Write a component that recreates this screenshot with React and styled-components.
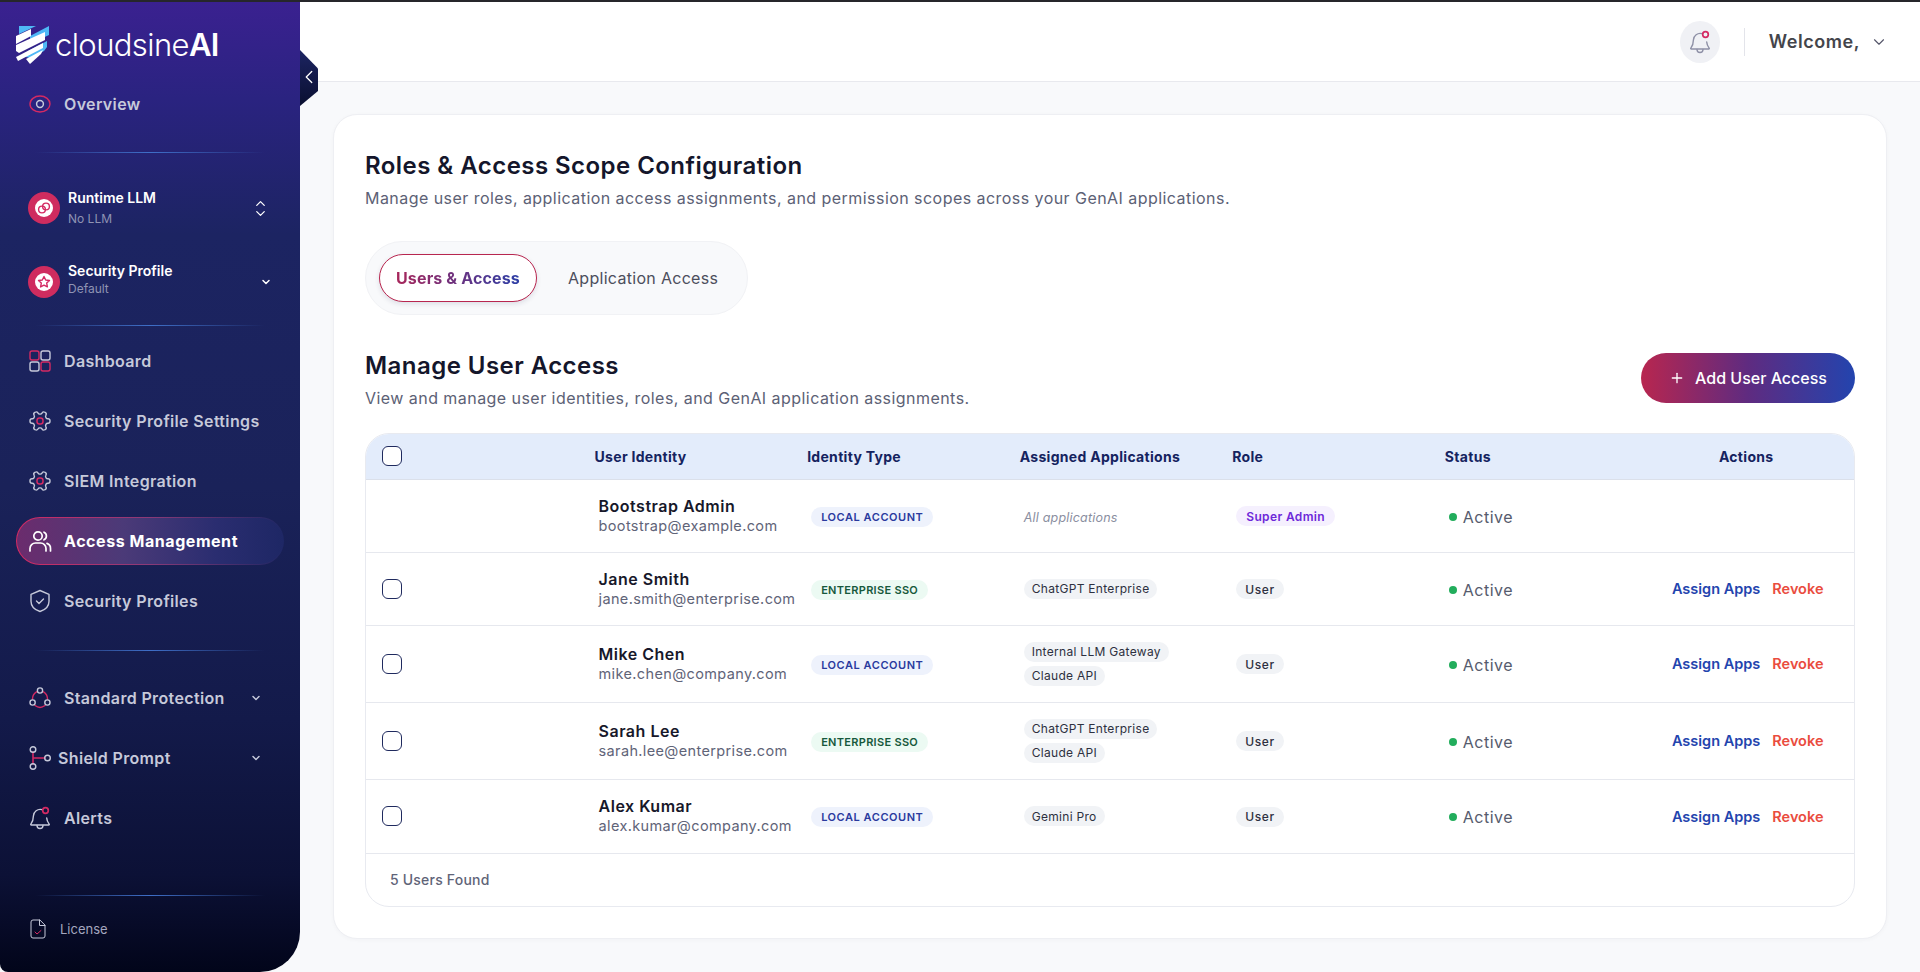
import React from 'react';
import styled, { createGlobalStyle } from 'styled-components';
import { ChevronDown, ChevronLeft, ChevronUp, Plus } from 'lucide-react';

const PINK = '#d42a63';
const GREY = '#c6c9da';

const GlobalStyle = createGlobalStyle`
  html, body {
    margin: 0;
    padding: 0;
    height: 100%;
    background: #f8f9fb;
    font-family: Inter, "Noto Sans", "Liberation Sans", sans-serif;
  }
  * {
    box-sizing: border-box;
  }
`;

const Shell = styled.div`
  height: 972px;
  border-top: 2px solid #26262b;
  display: flex;
  overflow: hidden;
`;

const Sidebar = styled.aside`
  position: relative;
  flex: 0 0 300px;
  height: 970px;
  display: flex;
  flex-direction: column;
  padding-top: 8px;
  border-radius: 0 0 40px 8px;
  background: linear-gradient(180deg, #3a2190 0%, #2a2380 10%, #1c2462 24%, #1a2259 50%, #131a4a 74%, #0c1136 90%, #02051a 100%);
`;

const Brand = styled.div`
  height: 70px;
  padding-left: 16px;
  display: flex;
  align-items: center;
  gap: 6px;
  color: #fff;
`;

const BrandName = styled.div`
  font-size: 31px;
  font-weight: 300;
  letter-spacing: -0.6px;
  margin-top: -2px;
  b {
    font-weight: 600;
  }
`;

const CollapseTab = styled.button`
  position: absolute;
  left: 300px;
  top: 48px;
  width: 18px;
  height: 56px;
  border: 0;
  padding: 0;
  display: flex;
  align-items: center;
  justify-content: center;
  color: #fff;
  background: linear-gradient(180deg, #1c2462, #0a0f30);
  clip-path: polygon(0 0, 100% 33%, 100% 73%, 0 100%);
  svg {
    flex: none;
    margin-top: -3px;
  }
`;

const NavGroup = styled.nav`
  display: flex;
  flex-direction: column;
  gap: 12px;
  margin-top: ${props => props.top || 0}px;
`;

const NavItem = styled.a`
  height: 48px;
  margin: 0 16px;
  padding: 0 ${props => props.chevron ? '22px' : '0'} 0 12px;
  display: flex;
  align-items: center;
  gap: ${props => props.tight ? '6px' : '12px'};
  font-size: 16px;
  font-weight: 600;
  letter-spacing: 0.35px;
  color: ${props => props.active ? '#fff' : GREY};
  border-radius: 24px;
  ${props => props.active && `
    font-weight: 700;
    letter-spacing: 0.55px;
    border: 1px solid transparent;
    padding-left: 11px;
    background:
      linear-gradient(90deg, #6b2c6d 0%, #4b3a78 40%, #2a2d70 75%, #1e2765 100%) padding-box,
      linear-gradient(90deg, #d42a63 0%, #8a3a78 50%, #1e2765 100%) border-box;
  `}
`;

const NavLabel = styled.span`
  flex: 1;
  white-space: nowrap;
`;

const Divider = styled.div`
  height: 1px;
  margin: ${props => props.top}px 35px 0;
  background: linear-gradient(90deg, transparent, #3f6fc8 50%, transparent);
`;

const Selector = styled.div`
  height: 48px;
  margin-top: ${props => props.top}px;
  padding: 0 28px;
  display: flex;
  align-items: center;
  gap: 8px;
  color: #fff;
`;

const SelectorBadge = styled.span`
  flex: 0 0 32px;
  height: 32px;
  border-radius: 50%;
  background: #cf2c5f;
  display: flex;
  align-items: center;
  justify-content: center;
`;

const SelectorDot = styled.span`
  width: 18px;
  height: 18px;
  border-radius: 50%;
  background: #fff;
  display: flex;
  align-items: center;
  justify-content: center;
`;

const SelectorText = styled.div`
  flex: 1;
  display: flex;
  flex-direction: column;
  gap: ${props => props.gap}px;
  margin-bottom: ${props => props.lift || 0}px;
`;

const SelectorTitle = styled.span`
  font-size: 14px;
  font-weight: 600;
  line-height: 16px;
`;

const SelectorSub = styled.span`
  font-size: 12px;
  line-height: 14px;
  color: #8f93b3;
`;

const ChevronStack = styled.span`
  display: flex;
  flex-direction: column;
  margin-right: 4px;
  svg + svg {
    margin-top: -5px;
  }
`;

const SideFooter = styled.div`
  margin-top: auto;
  height: 75px;
  padding: 0 0 11px 30px;
  display: flex;
  align-items: center;
  gap: 14px;
  font-size: 13px;
  color: #a4a7bf;
`;

const Main = styled.main`
  flex: 1;
  min-width: 0;
  display: flex;
  flex-direction: column;
`;

const TopBar = styled.header`
  height: 80px;
  flex: 0 0 80px;
  background: #fff;
  border-bottom: 1px solid #e8e9ee;
  display: flex;
  align-items: center;
  justify-content: flex-end;
  padding-right: 32px;
`;

const BellButton = styled.span`
  width: 40px;
  height: 42px;
  border-radius: 50%;
  background: #f0f1f5;
  display: flex;
  align-items: center;
  justify-content: center;
`;

const BarRule = styled.span`
  width: 1px;
  height: 28px;
  margin: 0 24px;
  background: #e3e4ea;
`;

const Welcome = styled.span`
  font-size: 18px;
  font-weight: 600;
  letter-spacing: 0.55px;
  color: #44454b;
  margin-right: 10px;
`;

const Content = styled.div`
  flex: 1;
  padding: 32px 33px 32px 33px;
`;

const Card = styled.section`
  height: 825px;
  background: #fff;
  border: 1px solid #eeeff3;
  border-radius: 24px;
  padding: 33px 31px 32px;
  box-shadow: 0 1px 4px rgba(30, 35, 70, 0.03);
`;

const Title = styled.h1`
  margin: 0;
  font-size: 24px;
  line-height: 36px;
  font-weight: 600;
  letter-spacing: 0.45px;
  color: #14162b;
`;

const Subtitle = styled.p`
  margin: 2px 0 0;
  font-size: 16px;
  line-height: 24px;
  letter-spacing: 0.45px;
  color: #5c6175;
`;

const Tabs = styled.div`
  margin-top: 31px;
  width: 383px;
  height: 74px;
  padding: 0 13px;
  display: flex;
  align-items: center;
  gap: 31px;
  background: #f8f9fb;
  border: 1px solid #f1f2f5;
  border-radius: 37px;
`;

const Tab = styled.span`
  height: ${props => props.active ? '48px' : 'auto'};
  padding: 0 ${props => props.active ? '16px' : '0'};
  display: flex;
  align-items: center;
  font-size: 16px;
  font-weight: ${props => props.active ? 700 : 400};
  letter-spacing: ${props => props.active ? '0.15px' : '0.3px'};
  color: #4c4e5c;
  border-radius: 24px;
  ${props => props.active && `
    background: #fff;
    border: 1.5px solid #b8264f;
    box-shadow: 0 2px 5px rgba(30, 35, 70, 0.12);
  `}
`;

const GradientText = styled.span`
  background: linear-gradient(90deg, #a8265a, #2c3ea6);
  -webkit-background-clip: text;
  background-clip: text;
  color: transparent;
`;

const SectionHead = styled.div`
  margin-top: 32px;
  display: flex;
  align-items: center;
  justify-content: space-between;
  height: 62px;
`;

const SectionText = styled.div`
  margin-top: 2px;
`;

const AddButton = styled.button`
  width: 214px;
  height: 50px;
  border: 0;
  border-radius: 25px;
  display: flex;
  align-items: center;
  justify-content: center;
  gap: 10px;
  font-family: inherit;
  font-size: 16px;
  font-weight: 500;
  color: #fff;
  background: linear-gradient(90deg, #b8264f 0%, #5f2b80 50%, #2344ae 100%);
`;

const TableWrap = styled.div`
  margin-top: 24px;
  border: 1px solid #e8eaf0;
  border-radius: 24px;
  overflow: hidden;
`;

const Table = styled.table`
  width: 100%;
  table-layout: fixed;
  border-collapse: collapse;
`;

const Th = styled.th`
  height: 45px;
  padding: 0 ${props => props.center ? '19px' : '16px'} 0 16px;
  background: #e3ecfb;
  border-bottom: 1px solid #dbe0ea;
  font-size: 14px;
  font-weight: 700;
  letter-spacing: 0.3px;
  text-align: ${props => props.center ? 'center' : 'left'};
  color: #15235f;
`;

const Tr = styled.tr`
  height: ${props => props.h}px;
  border-bottom: 1px solid #e6e8ee;
`;

const Td = styled.td`
  padding: ${props => props.check ? '0 16px' : '0 20px'};
  vertical-align: middle;
  text-align: ${props => props.center ? 'center' : 'left'};
`;

const CheckBox = styled.span`
  display: block;
  width: 20px;
  height: 20px;
  border: 1.5px solid #1f2a5e;
  border-radius: 6px;
  background: #fff;
`;

const UserName = styled.div`
  font-size: 16px;
  line-height: 20px;
  font-weight: 600;
  letter-spacing: 0.5px;
  color: #17182a;
`;

const UserMail = styled.div`
  font-size: 14.5px;
  line-height: 20px;
  letter-spacing: 0.36px;
  color: #5f6478;
  white-space: nowrap;
`;

const TypeBadge = styled.span`
  display: inline-flex;
  align-items: center;
  height: 20px;
  padding: 0 10px;
  border-radius: 10px;
  font-size: 11px;
  font-weight: 600;
  letter-spacing: ${props => props.sso ? '0.3px' : '0.55px'};
  white-space: nowrap;
  background: ${props => props.sso ? '#ecfaf3' : '#eef2fc'};
  color: ${props => props.sso ? '#17593c' : '#2a3a9e'};
`;

const AppList = styled.div`
  display: flex;
  flex-direction: column;
  align-items: flex-start;
  gap: 4px;
`;

const Chip = styled.span`
  display: inline-flex;
  align-items: center;
  height: 20px;
  padding: 0 ${props => props.strong ? '9px' : '8px'};
  border-radius: 10px;
  font-size: 12px;
  font-weight: ${props => props.strong ? 500 : 400};
  letter-spacing: ${props => props.strong ? '0.6px' : '0.3px'};
  white-space: nowrap;
  background: #f1f3f6;
  color: #2d3040;
`;

const RoleChip = styled(Chip)`
  padding: 0 10px;
  font-weight: 600;
  letter-spacing: 0.36px;
  background: #f5f0fe;
  color: #6d28d9;
`;

const NoApps = styled.span`
  font-size: 12.5px;
  font-style: italic;
  letter-spacing: 0.2px;
  color: #8a8ea0;
`;

const Status = styled.span`
  display: inline-flex;
  align-items: center;
  gap: 6px;
  font-size: 16px;
  letter-spacing: 0.5px;
  color: #565b6d;
  &::before {
    content: '';
    width: 8px;
    height: 8px;
    border-radius: 50%;
    background: #22ad5c;
  }
`;

const ActionRow = styled.div`
  display: flex;
  justify-content: center;
  gap: 12px;
  font-size: 14.5px;
  font-weight: 600;
`;

const Action = styled.a`
  color: ${props => props.danger ? '#ea4c3e' : '#2344ae'};
  white-space: nowrap;
`;

const TableFoot = styled.div`
  height: 52px;
  padding-left: 24px;
  display: flex;
  align-items: center;
  font-size: 14px;
  font-weight: 500;
  letter-spacing: 0.2px;
  color: #5f6478;
`;

const Svg = ({ children, size = 24 }) => (
  <svg width={size} height={size} viewBox="0 0 24 24" fill="none" strokeLinecap="round" strokeLinejoin="round">
    {children}
  </svg>
);

const GEAR = 'M12.22 2h-.44a2 2 0 0 0-2 2v.18a2 2 0 0 1-1 1.73l-.43.25a2 2 0 0 1-2 0l-.15-.08a2 2 0 0 0-2.73.73l-.22.38a2 2 0 0 0 .73 2.73l.15.1a2 2 0 0 1 1 1.72v.51a2 2 0 0 1-1 1.74l-.15.09a2 2 0 0 0-.73 2.73l.22.38a2 2 0 0 0 2.73.73l.15-.08a2 2 0 0 1 2 0l.43.25a2 2 0 0 1 1 1.73V20a2 2 0 0 0 2 2h.44a2 2 0 0 0 2-2v-.18a2 2 0 0 1 1-1.73l.43-.25a2 2 0 0 1 2 0l.15.08a2 2 0 0 0 2.73-.73l.22-.39a2 2 0 0 0-.73-2.73l-.15-.08a2 2 0 0 1-1-1.74v-.5a2 2 0 0 1 1-1.74l.15-.09a2 2 0 0 0 .73-2.73l-.22-.38a2 2 0 0 0-2.73-.73l-.15.08a2 2 0 0 1-2 0l-.43-.25a2 2 0 0 1-1-1.73V4a2 2 0 0 0-2-2z';

const LogoMark = () => (
  <svg width="33" height="38" viewBox="0 0 33 38">
    <polygon points="3,0 20,0 3,8" fill="#4fb8f6" />
    <polygon points="33,0 33,9 14,18 14,10" fill="#4fb8f6" />
    <polygon points="0,10 15,3 15,10 0,18" fill="#fff" />
    <polygon points="0,19 29,6 29,14 3,27 0,25" fill="#fff" />
    <polygon points="12,25 31,15 31,21 28,25 14,32 10,31" fill="#4fb8f6" />
    <polygon points="0,31 27,17 27,22 2,35" fill="#fff" />
    <polygon points="10,33 27,24 25,28 14,38" fill="#fff" />
  </svg>
);

const EyeIcon = () => (
  <Svg>
    <ellipse cx="12" cy="12" rx="10" ry="8" stroke={PINK} strokeWidth="1.4" />
    <circle cx="12" cy="12" r="3.4" stroke={GREY} strokeWidth="1.5" />
  </Svg>
);

const GridIcon = () => (
  <Svg>
    <rect x="2" y="2" width="9" height="9" rx="2" stroke={PINK} strokeWidth="1.4" />
    <rect x="13" y="2" width="9" height="9" rx="2" stroke={GREY} strokeWidth="1.4" />
    <rect x="2" y="13" width="9" height="9" rx="2" stroke={GREY} strokeWidth="1.4" />
    <rect x="13" y="13" width="9" height="9" rx="2" stroke={PINK} strokeWidth="1.4" />
  </Svg>
);

const GearIcon = () => (
  <Svg>
    <path d={GEAR} transform="rotate(90 12 12)" stroke={GREY} strokeWidth="1.4" />
    <rect x="9" y="9" width="6" height="6" rx="2.5" stroke={PINK} strokeWidth="1.5" />
  </Svg>
);

const UsersIcon = () => (
  <Svg>
    <circle cx="10" cy="7" r="4.2" stroke="#fff" strokeWidth="1.7" />
    <path d="M2 22v-2.5a5.5 5.5 0 0 1 5.5-5.5h5a5.5 5.5 0 0 1 5.5 5.5V22" stroke="#fff" strokeWidth="1.7" />
    <path d="M16 3.2a4.2 4.2 0 0 1 0 7.6M19 14.4a5.2 5.2 0 0 1 3.5 5V22" stroke="#fff" strokeWidth="1.7" />
  </Svg>
);

const ShieldIcon = () => (
  <Svg>
    <path d="M12 1.5l9 3.8v7c0 5-3.6 8.6-9 10.2-5.4-1.6-9-5.2-9-10.2v-7z" stroke={GREY} strokeWidth="1.4" />
    <path d="M8.5 12l2.5 2.5 4.5-4.5" stroke={GREY} strokeWidth="1.4" />
  </Svg>
);

const OrbitIcon = () => (
  <Svg>
    <path d="M4.5 13a8.2 8.2 0 0 1 4-7.2M15.5 5.8a8.2 8.2 0 0 1 4 7.2M17 19.5a8.2 8.2 0 0 1-10 0" stroke={PINK} strokeWidth="1.4" />
    <circle cx="12" cy="4.5" r="2.6" stroke={GREY} strokeWidth="1.4" />
    <circle cx="4.6" cy="16.5" r="2.6" stroke={GREY} strokeWidth="1.4" />
    <circle cx="19.4" cy="16.5" r="2.6" stroke={GREY} strokeWidth="1.4" />
  </Svg>
);

const BranchIcon = () => (
  <Svg>
    <path d="M5 6v12M5 12h12" stroke={PINK} strokeWidth="1.6" />
    <circle cx="5" cy="3.5" r="2.8" stroke={GREY} strokeWidth="1.4" />
    <circle cx="5" cy="20.5" r="2.8" stroke={GREY} strokeWidth="1.4" />
    <circle cx="19.5" cy="12" r="2.8" stroke={GREY} strokeWidth="1.4" />
  </Svg>
);

const BellIcon = ({ stroke = GREY }) => (
  <Svg>
    <path d="M14 3.6A6.8 6.8 0 0 0 5.4 10c0 4.8-1.7 7-2.6 8.2-.3.4 0 .8.4.8h17.600c.4 0 .7-.4.4-.8-.9-1.2-2.300-3-2.500-6.200" stroke={stroke} strokeWidth="1.4" />
    <path d="M9 19.5a3 3 0 0 0 6 0" stroke={stroke} strokeWidth="1.4" />
    <circle cx="17.5" cy="4.5" r="2.8" stroke={PINK} strokeWidth="1.7" />
  </Svg>
);

const FileIcon = () => (
  <svg width="16" height="20" viewBox="0 0 16 20" fill="none" strokeLinecap="round" strokeLinejoin="round">
    <path d="M9.5 1H3a2 2 0 0 0-2 2v14a2 2 0 0 0 2 2h10a2 2 0 0 0 2-2V6.500z" stroke={GREY} strokeWidth="1" />
    <path d="M9.5 1v5.500H15" stroke={GREY} strokeWidth="1" />
    <path d="M5 13l2 2 4-3.500" stroke={PINK} strokeWidth="1" />
  </svg>
);

const LinkIcon = () => (
  <svg width="14" height="14" viewBox="0 0 14 14" fill="none" stroke={PINK} strokeWidth="1.4">
    <circle cx="5" cy="8.5" r="3.4" />
    <circle cx="9" cy="5.5" r="3.4" />
  </svg>
);

const StarIcon = () => (
  <svg width="14" height="14" viewBox="0 0 14 14" fill="none" stroke={PINK} strokeWidth="1.4" strokeLinejoin="round">
    <path d="M7 1.5l1.700 3.500 3.800.5-2.800 2.600.7 3.800L7 10.100l-3.400 1.800.7-3.800L1.500 5.500l3.800-.5z" />
  </svg>
);

const mainNav = [
  { label: 'Dashboard', icon: <GridIcon /> },
  { label: 'Security Profile Settings', icon: <GearIcon /> },
  { label: 'SIEM Integration', icon: <GearIcon /> },
  { label: 'Access Management', icon: <UsersIcon />, active: true },
  { label: 'Security Profiles', icon: <ShieldIcon /> },
];

const users = [
  { name: 'Bootstrap Admin', mail: 'bootstrap@example.com', sso: false, apps: null, role: 'Super Admin', locked: true, h: 73 },
  { name: 'Jane Smith', mail: 'jane.smith@enterprise.com', sso: true, apps: ['ChatGPT Enterprise'], role: 'User', h: 73 },
  { name: 'Mike Chen', mail: 'mike.chen@company.com', sso: false, apps: ['Internal LLM Gateway', 'Claude API'], role: 'User', h: 77 },
  { name: 'Sarah Lee', mail: 'sarah.lee@enterprise.com', sso: true, apps: ['ChatGPT Enterprise', 'Claude API'], role: 'User', h: 77 },
  { name: 'Alex Kumar', mail: 'alex.kumar@company.com', sso: false, apps: ['Gemini Pro'], role: 'User', h: 74 },
];

const columns = ['User Identity', 'Identity Type', 'Assigned Applications', 'Role', 'Status'];

const App = () => (
  <>
    <GlobalStyle />
    <Shell>
      <Sidebar>
        <Brand>
          <LogoMark />
          <BrandName>cloudsine<b>AI</b></BrandName>
        </Brand>
        <CollapseTab><ChevronLeft size={22} strokeWidth={1.4} /></CollapseTab>
        <NavItem><EyeIcon /><NavLabel>Overview</NavLabel></NavItem>
        <Divider top={24} />
        <Selector top={31}>
          <SelectorBadge><SelectorDot><LinkIcon /></SelectorDot></SelectorBadge>
          <SelectorText gap={6} lift={1}>
            <SelectorTitle>Runtime LLM</SelectorTitle>
            <SelectorSub>No LLM</SelectorSub>
          </SelectorText>
          <ChevronStack>
            <ChevronUp size={15} color="#fff" strokeWidth={2} />
            <ChevronDown size={15} color="#fff" strokeWidth={2} />
          </ChevronStack>
        </Selector>
        <Selector top={26}>
          <SelectorBadge><SelectorDot><StarIcon /></SelectorDot></SelectorBadge>
          <SelectorText gap={3} lift={6}>
            <SelectorTitle>Security Profile</SelectorTitle>
            <SelectorSub>Default</SelectorSub>
          </SelectorText>
          <ChevronDown size={12} color="#fff" strokeWidth={3} />
        </Selector>
        <Divider top={19} />
        <NavGroup top={11}>
          {mainNav.map(item => (
            <NavItem key={item.label} active={item.active}>
              {item.icon}
              <NavLabel>{item.label}</NavLabel>
            </NavItem>
          ))}
        </NavGroup>
        <Divider top={25} />
        <NavGroup top={23}>
          <NavItem chevron>
            <OrbitIcon />
            <NavLabel>Standard Protection</NavLabel>
            <ChevronDown size={12} color={GREY} strokeWidth={3} />
          </NavItem>
          <NavItem chevron tight>
            <BranchIcon />
            <NavLabel>Shield Prompt</NavLabel>
            <ChevronDown size={12} color={GREY} strokeWidth={3} />
          </NavItem>
          <NavItem><BellIcon /><NavLabel>Alerts</NavLabel></NavItem>
        </NavGroup>
        <Divider top={53} />
        <SideFooter><FileIcon />License</SideFooter>
      </Sidebar>
      <Main>
        <TopBar>
          <BellButton><BellIcon stroke="#8e90a6" /></BellButton>
          <BarRule />
          <Welcome>Welcome,</Welcome>
          <ChevronDown size={18} color="#55566a" strokeWidth={1.5} />
        </TopBar>
        <Content>
          <Card>
            <Title>Roles &amp; Access Scope Configuration</Title>
            <Subtitle>Manage user roles, application access assignments, and permission scopes across your GenAI applications.</Subtitle>
            <Tabs>
              <Tab active><GradientText>Users &amp; Access</GradientText></Tab>
              <Tab>Application Access</Tab>
            </Tabs>
            <SectionHead>
              <SectionText>
                <Title>Manage User Access</Title>
                <Subtitle>View and manage user identities, roles, and GenAI application assignments.</Subtitle>
              </SectionText>
              <AddButton><Plus size={16} strokeWidth={2} />Add User Access</AddButton>
            </SectionHead>
            <TableWrap>
              <Table>
                <thead>
                  <tr>
                    <Th><CheckBox /></Th>
                    {columns.map(col => <Th key={col}>{col}</Th>)}
                    <Th center>Actions</Th>
                  </tr>
                </thead>
                <tbody>
                  {users.map(user => (
                    <Tr key={user.mail} h={user.h}>
                      <Td check>{!user.locked && <CheckBox />}</Td>
                      <Td>
                        <UserName>{user.name}</UserName>
                        <UserMail>{user.mail}</UserMail>
                      </Td>
                      <Td><TypeBadge sso={user.sso}>{user.sso ? 'ENTERPRISE SSO' : 'LOCAL ACCOUNT'}</TypeBadge></Td>
                      <Td>
                        {user.apps
                          ? <AppList>{user.apps.map(app => <Chip key={app}>{app}</Chip>)}</AppList>
                          : <NoApps>All applications</NoApps>}
                      </Td>
                      <Td>{user.locked ? <RoleChip>{user.role}</RoleChip> : <Chip strong>{user.role}</Chip>}</Td>
                      <Td><Status>Active</Status></Td>
                      <Td center>
                        {!user.locked && (
                          <ActionRow>
                            <Action>Assign Apps</Action>
                            <Action danger>Revoke</Action>
                          </ActionRow>
                        )}
                      </Td>
                    </Tr>
                  ))}
                </tbody>
              </Table>
              <TableFoot>5 Users Found</TableFoot>
            </TableWrap>
          </Card>
        </Content>
      </Main>
    </Shell>
  </>
);

export default App;
